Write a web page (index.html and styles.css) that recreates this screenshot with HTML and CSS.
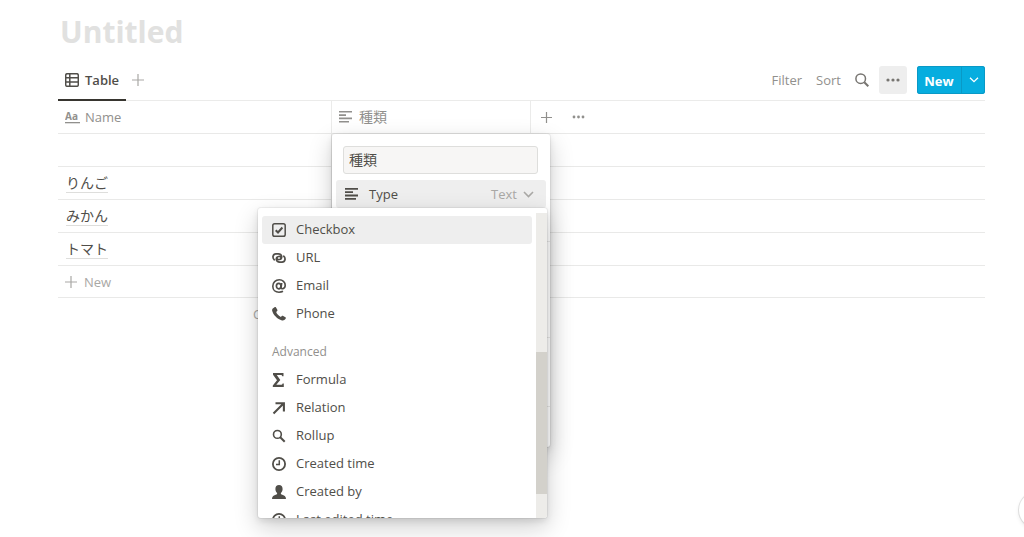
FILE: index.html
```html
<!DOCTYPE html>
<html lang="en">
<head>
<meta charset="utf-8">
<title>Untitled</title>
<link rel="stylesheet" href="styles.css">
</head>
<body>
<main class="page">
  <h1 class="title">Untitled</h1>
  <div class="toolbar">
    <button class="tab">
      <svg width="14" height="14" viewBox="0 0 14 14" fill="none" stroke="currentColor" stroke-width="1.5"><rect x=".7" y=".7" width="12.6" height="12.6" rx="1.6"/><path d="M1 4.8h12M1 9h12M4.8 1v12"/></svg>
      Table
    </button>
    <button class="plain add-view" aria-label="Add view"><svg width="12" height="12" viewBox="0 0 12 12" stroke="currentColor" stroke-width="1.2"><path d="M6 0v12M0 6h12"/></svg></button>
    <div class="actions">
      <button class="plain">Filter</button>
      <button class="plain">Sort</button>
      <button class="plain search" aria-label="Search"><svg width="14" height="14" viewBox="0 0 14 14" fill="none" stroke="currentColor"><circle cx="5.7" cy="5.7" r="4.8" stroke-width="1.5"/><path d="M9.3 9.3l4 4" stroke-width="2"/></svg></button>
      <button class="plain more" aria-label="More"><svg width="14" height="4" viewBox="0 0 14 4" fill="currentColor"><circle cx="2" cy="2" r="1.6"/><circle cx="7" cy="2" r="1.6"/><circle cx="12" cy="2" r="1.6"/></svg></button>
      <div class="new-group">
        <button class="new">New</button>
        <button class="new-menu" aria-label="New options"><svg width="10" height="6" viewBox="0 0 10 6" fill="none" stroke="currentColor" stroke-width="1.3"><path d="M1 .7l4 4 4-4"/></svg></button>
      </div>
    </div>
  </div>

  <table class="grid">
    <colgroup><col class="col-name"><col class="col-kind"><col></colgroup>
    <thead>
      <tr>
        <th><span class="cell"><svg width="15" height="13" viewBox="0 0 15 13"><text x="0" y="9" class="aa">Aa</text><path d="M0 11h15v1.3H0z" fill="currentColor"/></svg>Name</span></th>
        <th><span class="cell"><svg width="14" height="12" viewBox="0 0 14 12" fill="currentColor"><path d="M0 0h13v1.6H0zM0 3.3h7v1.6H0zM0 6.6h13v1.6H0zM0 9.9h10v1.6H0z"/></svg>種類</span></th>
        <th><span class="cell tools">
          <button class="plain" aria-label="Add property"><svg width="11" height="11" viewBox="0 0 11 11" stroke="currentColor" stroke-width="1.2"><path d="M5.5 0v11M0 5.500h11"/></svg></button>
          <button class="plain" aria-label="Properties"><svg width="13" height="4" viewBox="0 0 13 4" fill="currentColor"><circle cx="2" cy="2" r="1.4"/><circle cx="6.5" cy="2" r="1.4"/><circle cx="11" cy="2" r="1.4"/></svg></button>
        </span></th>
      </tr>
    </thead>
    <tbody>
      <tr><td></td><td></td><td></td></tr>
      <tr><td><a class="entry" href="#">りんご</a></td><td></td><td></td></tr>
      <tr><td><a class="entry" href="#">みかん</a></td><td></td><td></td></tr>
      <tr><td><a class="entry" href="#">トマト</a></td><td></td><td></td></tr>
    </tbody>
  </table>
  <button class="new-row"><svg width="12" height="12" viewBox="0 0 12 12" stroke="currentColor" stroke-width="1.2"><path d="M6 0v12M0 6h12"/></svg>New</button>
  <div class="summary">C</div>
</main>

<section class="popup property" aria-label="Property">
  <input class="prop-name" type="text" value="種類" aria-label="Property name">
  <button class="prop-type">
    <svg width="14" height="12" viewBox="0 0 14 12" fill="currentColor"><path d="M0 0h13v1.8H0zM0 3.3h8v1.8H0zM0 6.6h13v1.8H0zM0 9.9h11v1.8H0z"/></svg>
    <span>Type</span>
    <span class="value">Text</span>
    <svg class="chevron" width="11" height="7" viewBox="0 0 11 7" fill="none" stroke="currentColor" stroke-width="1.6"><path d="M1 1l4.500 4.500L10 1"/></svg>
  </button>
  <div class="group group-first"></div>
  <div class="group group-long"></div>
  <div class="group"></div>
</section>

<section class="popup types" aria-label="Property type">
  <div class="list">
    <button class="option selected"><svg width="14" height="14" viewBox="0 0 14 14" fill="none" stroke="currentColor"><rect x=".8" y=".8" width="12.4" height="12.4" rx="1.8" stroke-width="1.5"/><path d="M3.7 7.2l2.3 2.3 4.4-5" stroke-width="2"/></svg>Checkbox</button>
    <button class="option"><svg width="14" height="14" viewBox="0 0 14 14" fill="none" stroke="currentColor" stroke-width="1.7" stroke-linecap="round"><path d="M2.300 8.800C.2 7 .5 3 4 2.900h2.300c4 0 4.600 5.100 1 5.600-1.800.2-2.700-.8-2.300-1.900"/><path d="M11.700 5.200c2.100 1.800 1.800 5.800-1.700 5.900H7.700c-4 0-4.600-5.100-1-5.600 1.800-.2 2.700.8 2.300 1.900"/></svg>URL</button>
    <button class="option"><svg width="14" height="14" viewBox="0 0 14 14" fill="none" stroke="currentColor"><ellipse cx="6.700" cy="7.100" rx="2.300" ry="2.800" stroke-width="1.700"/><path d="M9.700 4L9.100 8.300c-.3 2.300 4.100 1.900 4.100-2C13.200 3 10.600.8 7.300.8 3.500.8.800 3.500.800 7.200c0 3.700 2.600 6 6.200 6 1.500 0 2.900-.3 4-.9" stroke-width="1.600"/></svg>Email</button>
    <button class="option"><svg width="14" height="14" viewBox="0 0 14 14" fill="currentColor"><path d="M2.500.3c.5-.4 1.100-.3 1.500.2l1.300 2.200c.3.500.2 1-.2 1.400l-.9.8c.5 1.800 2.600 4.100 4.700 5l.9-.9c.4-.4.900-.4 1.400-.1l2.200 1.400c.6.400.6 1 .2 1.500-1 1.300-2.200 2-3.600 1.600C5.500 12.500.900 7.700.100 3.600-.1 2.200.900 1.200 2.500.3z"/></svg>Phone</button>
    <h2 class="heading">Advanced</h2>
    <button class="option"><svg width="14" height="14" viewBox="0 0 14 14" fill="currentColor"><path d="M1 0h10.500v3.300H10.300C10 2.300 9.600 2 8.700 2H4.800l3.500 4.900L4.300 11.800h4.600c1 0 1.400-.3 1.700-1.400h1.200V14H.800v-1.500L5 7.200 1 1.700z"/></svg>Formula</button>
    <button class="option"><svg width="14" height="14" viewBox="0 0 14 14" fill="none" stroke="currentColor" stroke-width="2.100"><path d="M1.500 12.500L11 3M3.500 2.200h8.400v8.300"/></svg>Relation</button>
    <button class="option"><svg width="14" height="14" viewBox="0 0 14 14" fill="none" stroke="currentColor"><circle cx="5.400" cy="5.400" r="3.900" stroke-width="1.600"/><path d="M8 8l4.700 4.700" stroke-width="2"/></svg>Rollup</button>
    <button class="option"><svg width="14" height="14" viewBox="0 0 14 14" fill="none" stroke="currentColor"><circle cx="7" cy="7" r="6.100" stroke-width="1.800"/><path d="M7.300 3.200v4.400H4" stroke-width="1.500"/></svg>Created time</button>
    <button class="option"><svg width="14" height="14" viewBox="0 0 14 14" fill="currentColor"><path d="M7 0c2.300 0 3.600 1.500 3.600 3.900 0 1.700-.7 3.100-1.700 4v.8c0 .5.300.7.800.9 2.600.9 4.300 1.600 4.300 4.400H0c0-2.800 1.700-3.500 4.300-4.400.5-.2.800-.4.800-.9v-.8c-1-.9-1.700-2.300-1.700-4C3.400 1.500 4.700 0 7 0z"/></svg>Created by</button>
    <button class="option"><svg width="14" height="14" viewBox="0 0 14 14" fill="none" stroke="currentColor"><circle cx="7" cy="7" r="6.100" stroke-width="1.800"/><path d="M7.300 3.200v4.400H4" stroke-width="1.500"/></svg>Last edited time</button>
  </div>
  <div class="track"><div class="thumb"></div></div>
</section>
<button class="help" aria-label="Help"></button>
</body>
</html>
```
FILE: styles.css
```css
* { box-sizing: border-box; }

body {
  margin: 0;
  height: 100vh;
  position: relative;
  overflow: hidden;
  background: #fff;
  color: #504e49;
  font: 13px/20px "Open Sans", "Noto Sans CJK JP", sans-serif;
}

button, input {
  font: inherit;
  color: inherit;
  border: 0;
  padding: 0;
  margin: 0;
  background: none;
}

svg { flex: none; display: block; }

.page { padding: 12px 39px 0 58px; }

.title {
  margin: 0;
  padding-left: 2px;
  font-size: 30px;
  line-height: 40px;
  font-weight: 700;
  color: #e1e1e0;
}

.toolbar {
  display: flex;
  align-items: center;
  height: 49px;
  padding-top: 8px;
  border-bottom: 1px solid #ebebea;
}

.tab {
  display: flex;
  align-items: center;
  gap: 6px;
  height: 41px;
  padding: 2px 7px 0;
  border-bottom: 2px solid #37352f;
  font-weight: 600;
}

.plain { color: #91908d; display: flex; align-items: center; justify-content: center; }
.add-view { margin-left: 6px; color: #a9a8a5; }

.actions { display: flex; align-items: center; gap: 14px; margin-left: auto; }
.search { color: #777571; }
.more { width: 28px; height: 28px; margin-left: -4px; border-radius: 3px; background: #eeeeee; color: #777571; }

.new-group {
  display: flex;
  height: 28px;
  margin-left: -4px;
  border-radius: 3px;
  overflow: hidden;
  background: #06addf;
  color: #fff;
  box-shadow: inset 0 0 0 1px #0999c6;
}
.new { width: 45px; padding-top: 2px; font-weight: 700; border-right: 1px solid #0999c6; }
.new-menu { width: 23px; display: flex; align-items: center; justify-content: center; }

.grid { width: 100%; table-layout: fixed; border-collapse: separate; border-spacing: 0; }
.col-name { width: 274px; }
.col-kind { width: 199px; }
.grid th, .grid td { height: 33px; padding: 0 7px; border-bottom: 1px solid #e9e9e8; text-align: left; font-weight: 400; }
.grid th:not(:last-child), .grid td:first-child { border-right: 1px solid #ebebea; }
.cell { display: flex; align-items: center; gap: 5px; color: #91908d; }
.grid th:nth-child(2) .cell { gap: 6px; font-size: 14px; }
.grid .tools { gap: 20px; padding-left: 3px; }
.aa { font: 700 10px "Open Sans", sans-serif; fill: currentColor; }
.grid td:first-child { padding-bottom: 2px; }
.entry { margin-left: 1px; color: inherit; text-decoration: none; font-size: 14px; line-height: 18px; border-bottom: 1px solid #dededc; display: inline-block; vertical-align: middle; }

.new-row {
  display: flex;
  align-items: center;
  gap: 7px;
  width: 100%;
  height: 32px;
  padding: 0 7px;
  border-bottom: 1px solid #e9e9e8;
  color: #a9a8a5;
}
.summary { padding: 6px 0 0 195px; color: #a9a8a5; }

.popup {
  position: absolute;
  background: #fff;
  border-radius: 3px;
  box-shadow: 0 0 0 1px rgba(15, 15, 15, .05), 0 3px 6px rgba(15, 15, 15, .1), 0 9px 24px rgba(15, 15, 15, .2);
}

.property { left: 332px; top: 134px; width: 218px; height: 313px; padding: 12px 4px; }
.prop-name {
  display: block;
  width: 195px;
  height: 28px;
  margin: 0 0 6px 7px;
  padding: 0 5px 2px;
  border: 1px solid #dededc;
  border-radius: 3px;
  background: #f7f6f5;
  font-size: 14px;
}
.prop-type {
  display: flex;
  align-items: center;
  width: 100%;
  height: 28px;
  padding: 0 12px 0 9px;
  border-radius: 3px;
  background: #eeeeee;
}
.prop-type span { margin-left: 10px; }
.prop-type .value { margin-left: auto; color: #a9a8a5; }
.chevron { margin-left: 6px; color: #a9a8a5; }
.group { height: 69px; margin-right: -4px; border-bottom: 1px solid #e9e9e8; }
.group-first { height: 34px; }
.group-long { height: 96px; }

.types { left: 258px; top: 208px; width: 289px; height: 310px; display: flex; overflow: hidden; }
.list { flex: 1; padding: 8px 4px; }
.option {
  display: flex;
  align-items: center;
  gap: 10px;
  width: 100%;
  height: 28px;
  padding: 0 10px 2px;
  border-radius: 3px;
  text-align: left;
}
.option svg { margin-top: 2px; }
.selected { background: #eeeeee; }
.heading { margin: 14px 0 4px; padding: 0 10px; font-size: 12px; line-height: 20px; font-weight: 400; color: #91908d; }
.track { width: 11px; margin-top: 5px; padding-top: 139px; background: #edece9; }
.thumb { height: 142px; background: #d3d1cb; }

.help {
  position: absolute;
  right: -31px;
  bottom: 9px;
  width: 36px;
  height: 36px;
  border-radius: 50%;
  background: #fff;
  box-shadow: 0 0 0 1px rgba(15, 15, 15, .1), 0 2px 4px rgba(15, 15, 15, .1);
}
```
